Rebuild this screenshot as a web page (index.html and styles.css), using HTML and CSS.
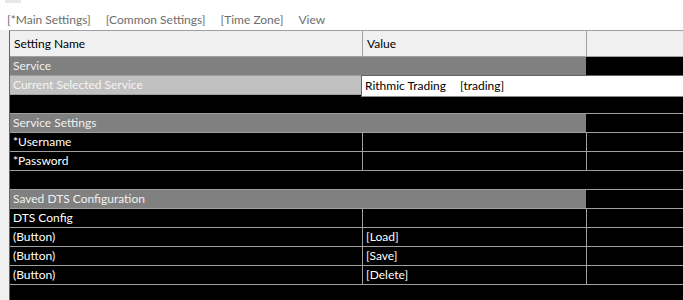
FILE: index.html
```html
<!DOCTYPE html>
<html lang="en">
<head>
  <meta charset="UTF-8" />
  <title>Settings</title>
  <link rel="stylesheet" href="styles.css">
</head>
<body>
  <div class="titlebar"><span class="title-icon"></span></div>

  <div class="tabs">
    <span>[*Main Settings]</span>
    <span>[Common Settings]</span>
    <span>[Time Zone]</span>
    <span>View</span>
  </div>

  <div class="panel">
    <div class="grid">
      <div class="row head">
        <div class="c1">Setting Name</div>
        <div class="c2">Value</div>
        <div class="c3"></div>
      </div>

      <div class="row cat"><div class="cat-name">Service</div><div class="c3"></div></div>
      <div class="row sel">
        <div class="c1">Current Selected Service</div>
        <div class="c2"></div>
        <div class="c3"></div>
        <div class="editor">Rithmic Trading<span class="gap"></span>[trading]</div>
      </div>
      <div class="row blank"></div>

      <div class="row cat"><div class="cat-name">Service Settings</div><div class="c3"></div></div>
      <div class="row"><div class="c1">*Username</div><div class="c2"></div><div class="c3"></div></div>
      <div class="row"><div class="c1">*Password</div><div class="c2"></div><div class="c3"></div></div>
      <div class="row blank"></div>

      <div class="row cat"><div class="cat-name">Saved DTS Configuration</div><div class="c3"></div></div>
      <div class="row"><div class="c1">DTS Config</div><div class="c2"></div><div class="c3"></div></div>
      <div class="row"><div class="c1">(Button)</div><div class="c2">[Load]</div><div class="c3"></div></div>
      <div class="row"><div class="c1">(Button)</div><div class="c2">[Save]</div><div class="c3"></div></div>
      <div class="row"><div class="c1">(Button)</div><div class="c2">[Delete]</div><div class="c3"></div></div>
    </div>
  </div>
</body>
</html>
```

FILE: styles.css
```css
body {
  margin: 0;
  background-color: #fff;
  font-family: Lato, "Noto Sans", sans-serif;
  font-size: 12px;
  height: 300px;
  overflow: hidden;
}

.titlebar {
  height: 9px;
  padding-left: 5px;
}

.title-icon {
  display: block;
  width: 16px;
  height: 3px;
  background-color: #e8e8e8;
}

.tabs {
  height: 21px;
  line-height: 21px;
  padding-left: 7px;
  display: flex;
  gap: 15px;
  color: #6d6d6d;
}

.panel {
  background-color: #f0f0f0;
  padding-left: 9px;
  height: 270px;
}

.grid {
  height: 100%;
  background-color: #000;
  border-left: 1px solid #646464;
  border-top: 1px solid #a0a0a0;
  color: #fff;
}

.row {
  display: flex;
  height: 18px;
  line-height: 18px;
  border-bottom: 1px solid #a0a0a0;
  position: relative;
}

.c1 {
  width: 349px;
  padding-left: 3px;
  white-space: nowrap;
}

.c2 {
  width: 220px;
  padding-left: 3px;
  border-left: 1px solid #a0a0a0;
  white-space: nowrap;
}

.c3 {
  flex: 1;
  border-left: 1px solid #a0a0a0;
}

.head {
  height: 25px;
  line-height: 25px;
  background-color: #f0f0f0;
  color: #000;
}

.head .c1 {
  padding-left: 4px;
  width: 348px;
}

.head .c2 {
  padding-left: 4px;
  width: 219px;
}

.cat .cat-name {
  width: 573px;
  padding-left: 3px;
  background-color: #808080;
  color: #f0f0f0;
}

.cat .c3 {
  border-left: none;
}

.sel .c1 {
  background-color: #c0c0c0;
  color: #f4f4f4;
}

.editor {
  position: absolute;
  left: 351px;
  top: -1px;
  right: -4px;
  height: 20px;
  line-height: 20px;
  padding-left: 3px;
  background-color: #fff;
  color: #000;
  border: 1px solid #8a8a8a;
  border-top-color: #646464;
  border-left-color: #646464;
  white-space: nowrap;
}

.editor .gap {
  display: inline-block;
  width: 14px;
}
```
